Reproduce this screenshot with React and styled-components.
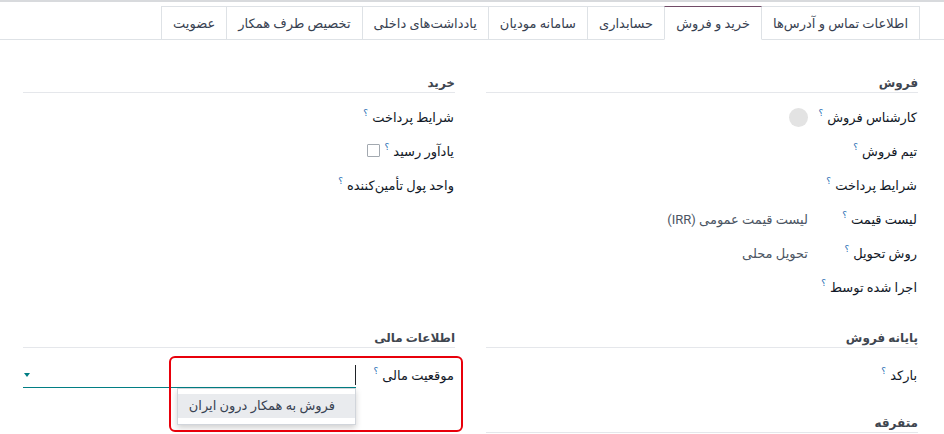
import styled, { createGlobalStyle } from "styled-components";

const GlobalStyle = createGlobalStyle`
  body {
    margin: 0;
    background: #fff;
    font-family: Roboto, "DejaVu Sans", sans-serif;
    color: #1f2328;
  }
`;

const Sheet = styled.div`
  direction: rtl;
  width: 944px;
  height: 434px;
  box-sizing: border-box;
  border-top: 2px solid #d8dadd;
  overflow: hidden;
`;

const TabBar = styled.div`
  display: flex;
  padding: 4px 24px 0 0;
  border-bottom: 1px solid #dee2e6;
`;

const Tab = styled.div`
  position: relative;
  z-index: ${(p) => (p.$active ? 1 : 0)};
  height: 34px;
  box-sizing: border-box;
  display: flex;
  align-items: center;
  padding: 0 11px;
  margin: 0 0 -1px -1px;
  border: 1px solid #dee2e6;
  border-top-color: ${(p) => (p.$active ? "#714b67" : "#dee2e6")};
  border-bottom-color: ${(p) => (p.$active ? "#fff" : "#dee2e6")};
  background: #fff;
  font-size: 13px;
  color: #374151;
  white-space: nowrap;
`;

const Body = styled.div`
  display: grid;
  grid-template-columns: 1fr 1fr;
  column-gap: 31px;
  padding: 0 26px 0 23px;
`;

const Group = styled.div`
  padding-top: ${(p) => p.$top}px;
`;

const GroupTitle = styled.div`
  font-size: 12px;
  font-weight: 700;
  line-height: 18px;
  color: #3f4650;
  border-bottom: 1px solid #e5e7eb;
  margin-bottom: ${(p) => p.$gap ?? 7}px;
`;

const Row = styled.div`
  position: relative;
  display: flex;
  align-items: center;
  height: 34px;
`;

const Label = styled.div`
  flex: 0 0 auto;
  width: ${(p) => (p.$width ? `${p.$width}px` : "auto")};
  box-sizing: border-box;
  padding-right: 1px;
  display: flex;
  align-items: center;
  gap: 5px;
  font-size: 13px;
  color: #111827;
  white-space: nowrap;
`;

const Help = styled.sup`
  font-size: 9px;
  color: #2a6fb5;
  margin-right: 4px;
  position: relative;
  top: -1px;
`;

const Value = styled.div`
  flex: 1;
  font-size: 13px;
  color: #4b5563;
  white-space: nowrap;
`;

const Avatar = styled.div`
  width: 19px;
  height: 19px;
  border-radius: 50%;
  background: #e3e3e3;
`;

const Checkbox = styled.span`
  width: 13px;
  height: 13px;
  box-sizing: border-box;
  border: 1px solid #a3a9b0;
  border-radius: 1px;
  background: #fff;
`;

const Select = styled.div`
  position: relative;
  flex: 1;
  height: 24px;
  display: flex;
  align-items: center;
  justify-content: flex-end;
  border-bottom: 1px solid #017e84;
`;

const Caret = styled.span`
  position: absolute;
  right: 0;
  top: 2px;
  width: 1px;
  height: 20px;
  background: #1f2328;
`;

const Arrow = styled.span`
  width: 0;
  height: 0;
  margin-left: 1px;
  border-top: 4px solid #017e84;
  border-left: 3.5px solid transparent;
  border-right: 3.5px solid transparent;
`;

const Menu = styled.div`
  position: absolute;
  top: 100%;
  right: 0;
  margin-top: 1px;
  width: 179px;
  box-sizing: border-box;
  padding: 5px 0 6px;
  background: #fff;
  border: 1px solid #d1d5db;
  box-shadow: 0 3px 6px rgba(0, 0, 0, 0.18);
  z-index: 2;
`;

const MenuItem = styled.div`
  height: 24px;
  display: flex;
  align-items: center;
  padding-right: 20px;
  background: #e9ebee;
  font-size: 13px;
  color: #374151;
`;

const Highlight = styled.div`
  position: absolute;
  top: -2px;
  right: -8px;
  left: 146px;
  height: 76px;
  box-sizing: border-box;
  border: 2.5px solid #e8000b;
  border-radius: 6px;
  pointer-events: none;
  z-index: 3;
`;

const tabs = [
  "اطلاعات تماس و آدرس‌ها",
  "خرید و فروش",
  "حسابداری",
  "سامانه مودیان",
  "یادداشت‌های داخلی",
  "تخصیص طرف همکار",
  "عضویت",
];

const salesRows = [
  { label: "کارشناس فروش", avatar: true },
  { label: "تیم فروش" },
  { label: "شرایط پرداخت" },
  { label: "لیست قیمت", value: "لیست قیمت عمومی (IRR)" },
  { label: "روش تحویل", value: "تحویل محلی" },
  { label: "اجرا شده توسط" },
];

function Field({ label, width, children }) {
  return (
    <Row>
      <Label $width={width}>
        <span>
          {label}
          <Help>؟</Help>
        </span>
      </Label>
      {children}
    </Row>
  );
}

export default function App() {
  return (
    <>
      <GlobalStyle />
      <Sheet>
        <TabBar>
          {tabs.map((t, i) => (
            <Tab key={t} $active={i === 1}>
              {t}
            </Tab>
          ))}
        </TabBar>

        <Body>
          <Group $top={34}>
            <GroupTitle>فروش</GroupTitle>
            {salesRows.map((r) => (
              <Field key={r.label} label={r.label} width={110}>
                <Value>{r.avatar ? <Avatar /> : r.value}</Value>
              </Field>
            ))}
          </Group>

          <Group $top={34}>
            <GroupTitle>خرید</GroupTitle>
            <Field label="شرایط پرداخت" />
            <Row>
              <Label>
                <span>
                  یادآور رسید
                  <Help>؟</Help>
                </span>
                <Checkbox />
              </Label>
            </Row>
            <Field label="واحد پول تأمین‌کننده" />
          </Group>

          <Group $top={25}>
            <GroupTitle $gap={10}>پایانه فروش</GroupTitle>
            <Field label="بارکد" />
          </Group>

          <Group $top={25}>
            <GroupTitle $gap={10}>اطلاعات مالی</GroupTitle>
            <Row>
              <Label $width={99}>
                <span>
                  موقعیت مالی
                  <Help>؟</Help>
                </span>
              </Label>
              <Select>
                <Caret />
                <Arrow />
                <Menu>
                  <MenuItem>فروش به همکار درون ایران</MenuItem>
                </Menu>
              </Select>
              <Highlight />
            </Row>
          </Group>

          <Group $top={22}>
            <GroupTitle>متفرقه</GroupTitle>
          </Group>
        </Body>
      </Sheet>
    </>
  );
}
